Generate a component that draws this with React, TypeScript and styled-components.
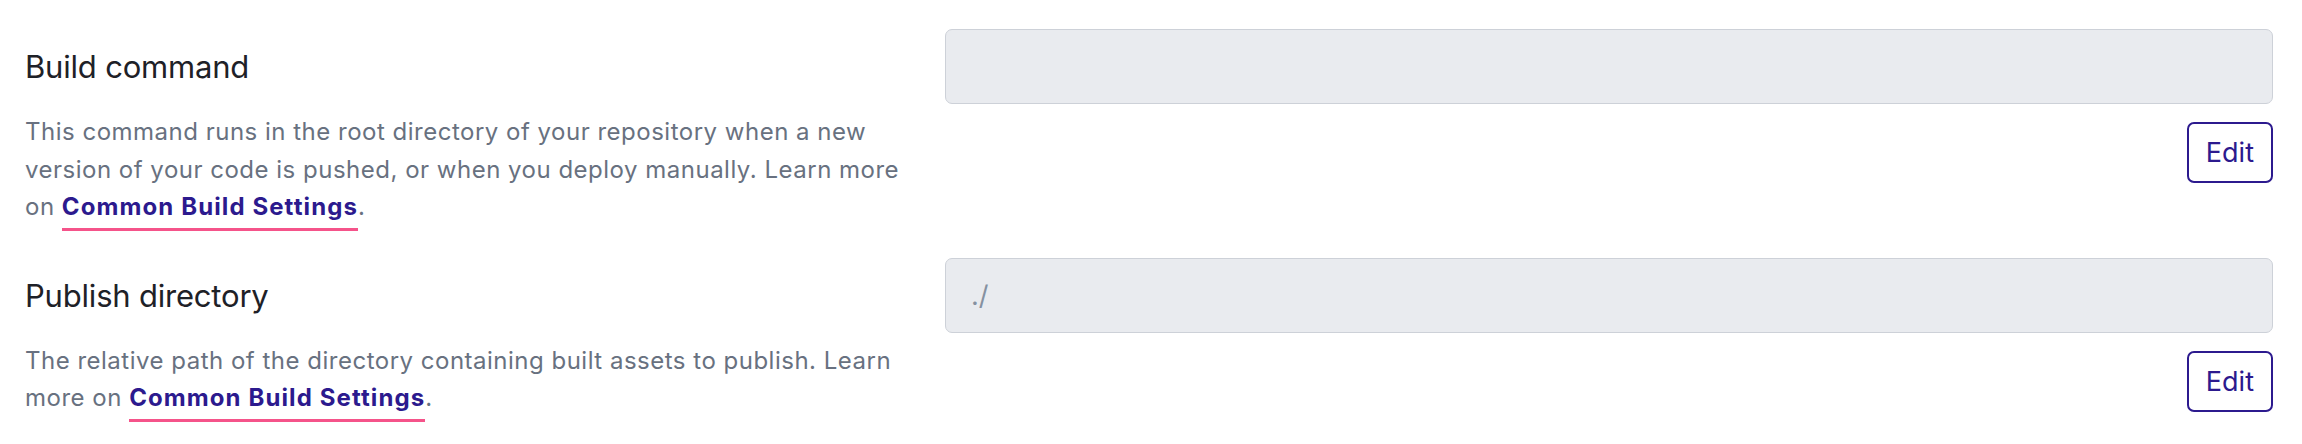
import React from "react";
import styled, { createGlobalStyle } from "styled-components";

const GlobalStyle = createGlobalStyle`
  html, body {
    margin: 0;
    padding: 0;
    background: #ffffff;
  }
  body {
    font-family: Inter, "Noto Sans", "Liberation Sans", sans-serif;
    -webkit-font-smoothing: antialiased;
  }
`;

// page wrapper
const Page = styled.div`
  box-sizing: border-box;
  min-height: 444px;
  padding: 29px 29px 20px 25px;
  display: flex;
  flex-direction: column;
  gap: 22px;
`;

// one setting: text on the left, field on the right
const SettingRow = styled.section`
  display: grid;
  grid-template-columns: 890px 1fr;
  column-gap: 30px;
  align-items: start;
`;

const Info = styled.div`
  display: flex;
  flex-direction: column;
  padding-top: 18px;
`;

const Title = styled.h3`
  margin: 0;
  font-size: 31px;
  line-height: 40px;
  font-weight: 400;
  color: #1e2127;
  letter-spacing: -0.2px;
`;

const Description = styled.p`
  margin: 26px 0 0;
  padding-bottom: 10px;
  font-size: 24px;
  line-height: 37.5px;
  letter-spacing: 0.5px;
  color: #687180;
`;

const DocLink = styled.a`
  color: #2c1a8e;
  font-weight: 700;
  letter-spacing: 1.1px;
  text-decoration: none;
  padding-bottom: 7px;
  border-bottom: 3px solid #f5538a;
`;

const Field = styled.div`
  display: flex;
  flex-direction: column;
  align-items: flex-end;
  gap: 18px;
`;

const Input = styled.div`
  box-sizing: border-box;
  width: 100%;
  height: 75px;
  padding: 0 25px;
  display: flex;
  align-items: center;
  background: #e9ebef;
  border: 1.5px solid #cdd1d8;
  border-radius: 7px;
  font-size: 27px;
  color: #8591a1;
`;

const EditButton = styled.button`
  box-sizing: border-box;
  height: 61px;
  padding: 0 17px;
  background: #ffffff;
  border: 2px solid #2c1a8e;
  border-radius: 7px;
  font-family: Inter, "Noto Sans", "Liberation Sans", sans-serif;
  font-size: 27px;
  color: #2c1a8e;
  cursor: pointer;
`;

interface SettingProps {
  title: string;
  lead: string;
  value?: string;
}

const Setting: React.FC<SettingProps> = ({ title, lead, value }) => (
  <SettingRow>
    <Info>
      <Title>{title}</Title>
      <Description>
        {lead} <DocLink href="#">Common Build Settings</DocLink>.
      </Description>
    </Info>
    <Field>
      <Input>{value}</Input>
      <EditButton>Edit</EditButton>
    </Field>
  </SettingRow>
);

export default function App() {
  return (
    <>
      <GlobalStyle />
      <Page>
        <Setting
          title="Build command"
          lead="This command runs in the root directory of your repository when a new version of your code is pushed, or when you deploy manually. Learn more on"
        />
        <Setting
          title="Publish directory"
          lead="The relative path of the directory containing built assets to publish. Learn more on"
          value="./"
        />
      </Page>
    </>
  );
}
